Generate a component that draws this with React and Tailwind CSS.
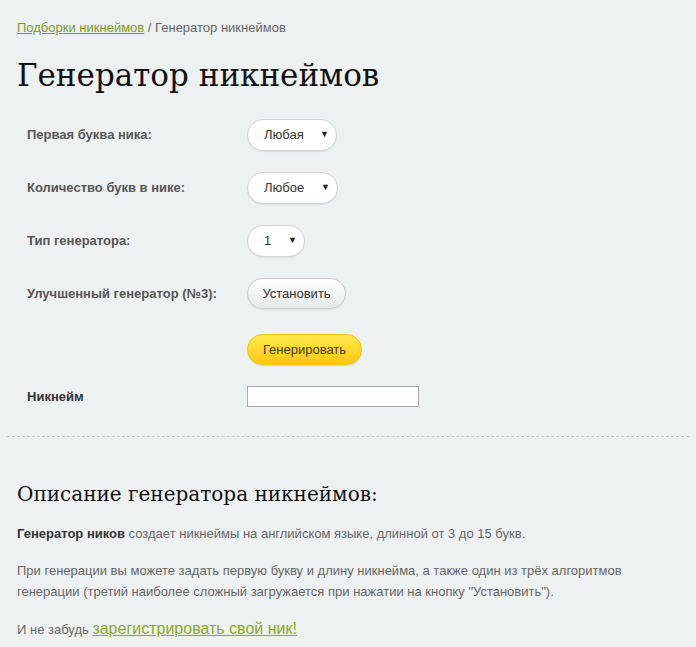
import React from "react";

function Select({ value, w }) {
  return (
    <div
      className={`flex items-center justify-between h-[32px] rounded-[16px] bg-white border border-[#d4d4d4] shadow-[0_1px_1px_rgba(0,0,0,0.08)] pl-[16px] pr-[7px] text-[13px] text-[#333] ${w}`}
    >
      <span>{value}</span>
      <span className="text-[9px] text-[#222]">▼</span>
    </div>
  );
}

export default function App() {
  return (
    <div className="min-h-[647px] w-[696px] bg-[#eef1f2] font-['Liberation_Sans',Arial,sans-serif] text-[13px] text-[#555]">
      <div className="px-[17px] pt-[19px]">
        <div className="h-[18px] leading-[18px] text-[13px] text-[#666]">
          <a className="text-[#7b9a25] underline">Подборки никнеймов</a> / Генератор никнеймов
        </div>
        <h1 className="mt-[20px] font-['DejaVu_Serif',serif] text-[31px] leading-[36px] text-[#111]">
          Генератор никнеймов
        </h1>
      </div>

      <div className="mt-[26px] pl-[27px] grid grid-cols-[220px_1fr] items-center gap-y-[21px] font-bold text-[13px] text-[#555]">
        <div>Первая буква ника:</div>
        <div className="font-normal"><Select value="Любая" w="w-[90px]" /></div>
        <div>Количество букв в нике:</div>
        <div className="font-normal"><Select value="Любое" w="w-[91px]" /></div>
        <div>Тип генератора:</div>
        <div className="font-normal"><Select value="1" w="w-[58px]" /></div>
        <div>Улучшенный генератор (№3):</div>
        <div className="font-normal">
          <button className="h-[31px] w-[99px] rounded-[16px] border border-[#ccc] bg-gradient-to-b from-white to-[#e6e9eb] text-[13px] text-[#333] shadow-[0_1px_1px_rgba(0,0,0,0.08)]">
            Установить
          </button>
        </div>
        <div></div>
        <div className="font-normal pt-[4px]">
          <button className="h-[31px] w-[115px] rounded-[16px] border border-[#f0c400] bg-gradient-to-b from-[#ffe94a] to-[#ffc800] text-[13px] text-[#4a3a10] shadow-[0_1px_1px_rgba(0,0,0,0.12)]">
            Генерировать
          </button>
        </div>
        <div className="text-[#333]">Никнейм</div>
        <div className="font-normal">
          <div className="h-[21px] w-[172px] bg-white border border-[#a9a9a9]"></div>
        </div>
      </div>

      <div className="mx-[7px] mt-[29px] border-t border-dashed border-[#c4c8ca]"></div>

      <div className="px-[17px]">
        <h2 className="mt-[43px] font-['DejaVu_Serif',serif] text-[20px] leading-[28px] text-[#111]">
          Описание генератора никнеймов:
        </h2>
        <p className="mt-[15px] leading-[21px] text-[#666]">
          <b className="text-[#333]">Генератор ников</b> создает никнеймы на английском языке, длинной от 3 до 15 букв.
        </p>
        <p className="mt-[16px] leading-[21px] text-[#666]">
          При генерации вы можете задать первую букву и длину никнейма, а также один из трёх алгоритмов генерации (третий наиболее сложный загружается при нажатии на кнопку "Установить").
        </p>
        <p className="mt-[16px] leading-[21px] text-[#666]">
          И не забудь <a className="text-[16px] leading-[21px] text-[#8aaa1f] underline">зарегистрировать свой ник!</a>
        </p>
      </div>
    </div>
  );
}
